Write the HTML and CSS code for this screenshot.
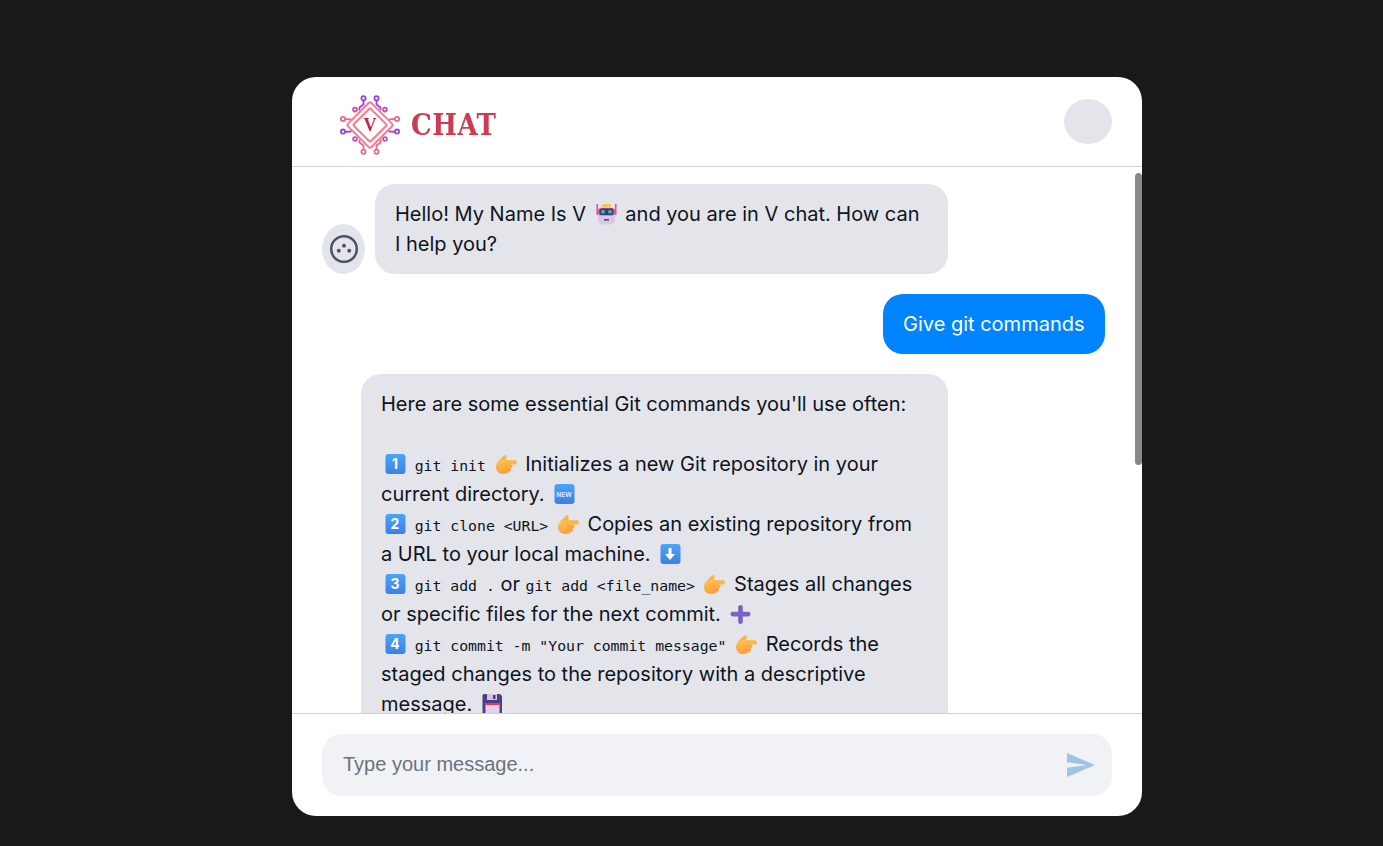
FILE: index.html
```html
<!DOCTYPE html>
<html lang="en">
<head>
<meta charset="utf-8">
<title>V Chat</title>
<link rel="stylesheet" href="styles.css">
</head>
<body>
<svg class="sprite" aria-hidden="true">
  <defs>
    <linearGradient id="keyfill" x1="0" y1="0" x2="0" y2="1"><stop offset="0" stop-color="#4aa5f6"/><stop offset="1" stop-color="#3f7fe4"/></linearGradient>
    <linearGradient id="handfill" x1="0" y1="0" x2="0" y2="1"><stop offset="0" stop-color="#ffc44e"/><stop offset="1" stop-color="#f9a040"/></linearGradient>
    <symbol id="key" viewBox="0 0 27 24"><rect x="4" y="2" width="20" height="20" rx="3" fill="url(#keyfill)"/></symbol>
    <symbol id="hand" viewBox="0 0 27 24">
      <g fill="url(#handfill)">
        <path d="M5 10.500L11 3.800c1.300-1.500 3.800-.5 3.300 1.500L13.400 9.500z"/>
        <rect x="3.500" y="8" width="15" height="14" rx="6.500"/>
      </g>
      <rect x="12" y="8.200" width="12.500" height="4.400" rx="2.200" fill="#fdb547"/>
      <rect x="12" y="12.800" width="8" height="3.200" rx="1.600" fill="#f9a846"/>
      <rect x="12" y="16.200" width="6.500" height="3" rx="1.500" fill="#f8a044"/>
    </symbol>
    <symbol id="robot" viewBox="0 0 27 24">
      <rect x="4" y="3" width="1.500" height="10" fill="#ea4f8b"/><rect x="22.500" y="3" width="1.500" height="10" fill="#ea4f8b"/>
      <circle cx="4.800" cy="3" r="1" fill="#ea4f8b"/><circle cx="23.200" cy="3" r="1" fill="#ea4f8b"/>
      <rect x="9.500" y="2" width="9" height="3.200" rx="1.500" fill="#f6c445"/>
      <rect x="5.500" y="5" width="17" height="17.500" rx="5" fill="#dcc6ea"/>
      <rect x="5.500" y="6" width="17" height="7.500" rx="3" fill="#e0568f"/>
      <rect x="7" y="6.500" width="14" height="6.500" rx="2.500" fill="#34415e"/>
      <rect x="8.500" y="8" width="4" height="3.600" rx="1.500" fill="#3fa8ec"/><rect x="15.500" y="8" width="4" height="3.600" rx="1.500" fill="#3fa8ec"/>
      <rect x="11.500" y="17" width="5" height="1.600" fill="#5b4a6e"/>
    </symbol>
    <symbol id="plus" viewBox="0 0 27 24">
      <rect x="11.700" y="3" width="4.600" height="19" rx="2.300" fill="#7a62c4"/>
      <rect x="4" y="9.800" width="20" height="4.600" rx="2.300" fill="#7a62c4"/>
    </symbol>
    <symbol id="floppy" viewBox="0 0 27 24">
      <path d="M5.500 2h16l2 2v18h-18a1.500 1.500 0 0 1-1.500-1.500v-17A1.500 1.500 0 0 1 5.500 2z" fill="#4f3d85"/>
      <rect x="8.500" y="2" width="10" height="6" fill="#cfc6e2"/><rect x="14.500" y="3" width="2.500" height="4" fill="#4f3d85"/>
      <rect x="7" y="11" width="14" height="11" fill="#ddd3ee"/><rect x="7" y="11" width="14" height="2" fill="#e8365d"/>
    </symbol>
  </defs>
</svg>

<main class="card">
  <header class="head">
    <div class="brand">
      <svg class="logo" viewBox="-30 -30 60 60" aria-hidden="true">
        <g fill="none" stroke-width="1.800" stroke-linejoin="round">
          <g stroke="#a83fd0">
            <path d="M-6.500-25v4.500l-4 3v3M6.500-25v4.500l4 3v3M-25.500 6.800l6-.3 4-5"/>
            <path d="M25.500 6.800l-6-.3-4-5"/>
          </g>
          <g stroke="#e8688f">
            <path d="M-25.500-6l6 .3 4 5M25.500-6l-6 .3-4 5M-6.500 25v-4.500l-4-3v-3M6.500 25v-4.500l4-3v-3"/>
          </g>
          <g fill="#fff">
            <circle cx="-6.500" cy="-26.700" r="2.100" stroke="#9a3fdc"/><circle cx="6.500" cy="-26.700" r="2.100" stroke="#9a3fdc"/>
            <circle cx="-27" cy="-6" r="2.100" stroke="#e66c80"/><circle cx="27" cy="-6" r="2.100" stroke="#e66c80"/>
            <circle cx="-27" cy="6.600" r="2.100" stroke="#9a3fdc"/><circle cx="27" cy="6.600" r="2.100" stroke="#9a3fdc"/>
            <circle cx="-6.500" cy="26.700" r="2.100" stroke="#e66c80"/><circle cx="6.500" cy="26.700" r="2.100" stroke="#e66c80"/>
            <circle cx="-15" cy="-15.400" r="1.900" stroke="#c04fb4"/><circle cx="15" cy="-15.400" r="1.900" stroke="#c04fb4"/>
            <circle cx="-15" cy="14" r="1.900" stroke="#c04fb4"/><circle cx="15" cy="14" r="1.900" stroke="#c04fb4"/>
          </g>
          <g stroke="#fb7a8c" stroke-width="2" transform="rotate(45)">
            <rect x="-16.500" y="-16.500" width="33" height="33" rx="2" fill="#fff"/>
            <rect x="-12" y="-12" width="24" height="24" rx="1"/>
          </g>
        </g>
        <text class="logo-v" x="0" y="6" text-anchor="middle">V</text>
      </svg>
      <span class="wordmark">CHAT</span>
    </div>
    <div class="user-avatar"></div>
  </header>

  <div class="viewport">
    <section class="messages">
      <div class="row">
        <div class="avatar">
          <svg class="bot" viewBox="0 0 28 28" aria-hidden="true"><circle cx="14" cy="14" r="12.800" fill="none" stroke="#4b5563" stroke-width="2.500"/><circle cx="14" cy="10.700" r="2" fill="#4b5563"/><circle cx="8.800" cy="15.700" r="2" fill="#4b5563"/><circle cx="19.200" cy="15.700" r="2" fill="#4b5563"/></svg>
        </div>
        <div class="bubble">Hello! My Name Is V <svg class="emoji"><use href="#robot"/></svg> and you are in V chat. How can I help you?</div>
      </div>

      <div class="row row-user">
        <div class="bubble bubble-user">Give git commands</div>
      </div>

      <div class="row row-indent">
        <div class="bubble">Here are some essential Git commands you'll use often:<br><br>
<svg class="emoji"><use href="#key"/><text class="keytext" x="14" y="17">1</text></svg> <code>git init</code> <svg class="emoji"><use href="#hand"/></svg> Initializes a new Git repository in your current directory. <svg class="emoji"><use href="#key"/><text class="newtext" x="14" y="14.500">NEW</text></svg><br>
<svg class="emoji"><use href="#key"/><text class="keytext" x="14" y="17">2</text></svg> <code>git clone &lt;URL&gt;</code> <svg class="emoji"><use href="#hand"/></svg> Copies an existing repository from a URL to your local machine. <svg class="emoji"><use href="#key"/><path class="arrow" d="M12.500 6h3v6h3.500l-5 6-5-6h3.500z"/></svg><br>
<svg class="emoji"><use href="#key"/><text class="keytext" x="14" y="17">3</text></svg> <code>git add .</code> or <code>git add &lt;file_name&gt;</code> <svg class="emoji"><use href="#hand"/></svg> Stages all changes or specific files for the next commit. <svg class="emoji"><use href="#plus"/></svg><br>
<svg class="emoji"><use href="#key"/><text class="keytext" x="14" y="17">4</text></svg> <code>git commit -m "Your commit message"</code> <svg class="emoji"><use href="#hand"/></svg> Records the staged changes to the repository with a descriptive message. <svg class="emoji"><use href="#floppy"/></svg></div>
      </div>
    </section>
    <div class="thumb"></div>
  </div>

  <footer class="composer">
    <form class="input-wrap">
      <input class="input" type="text" placeholder="Type your message...">
      <button class="send" type="button" aria-label="Send">
        <svg viewBox="2 3 21 18" aria-hidden="true"><path d="M2.010 21L23 12 2.010 3 2 10l15 2-15 2z"/></svg>
      </button>
    </form>
  </footer>
</main>
</body>
</html>
```
FILE: styles.css
```css
* { box-sizing: border-box; }
html, body { height: 100%; }
body {
  margin: 0;
  background: #18191b;
  font-family: Inter, "Liberation Sans", sans-serif;
  overflow: hidden;
}
.sprite { position: absolute; width: 0; height: 0; }
.card {
  width: 850px;
  height: 739px;
  margin: 77px 0 0 292px;
  background: #fff;
  border-radius: 24px;
  display: flex;
  flex-direction: column;
  overflow: hidden;
}
.head {
  flex: 0 0 90px;
  display: flex;
  align-items: center;
  justify-content: space-between;
  padding: 0 30px 0 48px;
  border-bottom: 1px solid #d1d1d1;
}
.brand { display: flex; align-items: center; gap: 11px; padding-top: 7px; }
.logo { width: 60px; height: 60px; display: block; filter: blur(.3px); }
.logo-v { font: 700 18px "Liberation Serif", serif; fill: #bd2a3d; }
.wordmark {
  font: 700 29px/1 "DejaVu Serif Condensed", "DejaVu Serif", serif;
  color: #cf3a50;
  letter-spacing: .5px;
  filter: blur(.3px);
}
.user-avatar { width: 48px; height: 45px; border-radius: 50%; background: #e3e5ea; }
.viewport { flex: 1; min-height: 0; position: relative; }
.messages {
  height: 100%;
  overflow-y: auto;
  scrollbar-width: none;
  padding: 17px 37px 22px 30px;
  display: flex;
  flex-direction: column;
  gap: 20px;
}
.thumb {
  position: absolute;
  top: 6px;
  right: 0;
  width: 7px;
  height: 292px;
  background: #888;
  border-radius: 4px;
}
.row {
  display: flex;
  align-items: flex-end;
  gap: 10px;
  width: 626px;
  flex: none;
}
.row-user { width: auto; justify-content: flex-end; }
.row-indent { padding-left: 39px; }
.avatar {
  flex: none;
  width: 43px;
  height: 50px;
  border-radius: 50%;
  background: #e3e5ea;
  display: flex;
  align-items: center;
  justify-content: center;
}
.bot { width: 28px; height: 28px; flex: none; }
.bubble {
  flex: 1;
  padding: 15px 20px;
  border-radius: 20px;
  background: #e3e5ea;
  color: #0f1320;
  font-size: 20px;
  line-height: 30px;
}
.bubble-user { flex: none; padding: 15px 20.5px; background: #0084ff; color: #fff; }
.emoji { width: 28px; height: 24px; vertical-align: -5px; }
.keytext { font: 700 14px Inter, sans-serif; fill: #fff; text-anchor: middle; }
.newtext { font: 700 6.500px Inter, sans-serif; fill: #dbe9ff; text-anchor: middle; }
.arrow { fill: #fff; }
code {
  font-family: "DejaVu Sans Mono", monospace;
  font-size: 14.8px;
  line-height: 1;
}
.composer {
  flex: 0 0 103px;
  padding: 20px 30px;
  border-top: 1px solid #d1d1d1;
}
.input-wrap {
  height: 62px;
  display: flex;
  align-items: center;
  padding: 0 17px 0 21px;
  border-radius: 20px;
  background: #f0f2f5;
}
.input {
  flex: 1;
  min-width: 0;
  border: 0;
  outline: 0;
  background: transparent;
  font: 20px "Liberation Sans", sans-serif;
  color: #111827;
  padding: 0 0 2px;
}
.input::placeholder { color: #6b7280; opacity: 1; }
.send { border: 0; background: none; padding: 0; width: 28px; height: 24px; }
.send svg { display: block; width: 28px; height: 24px; fill: #a0c4e4; }
```
